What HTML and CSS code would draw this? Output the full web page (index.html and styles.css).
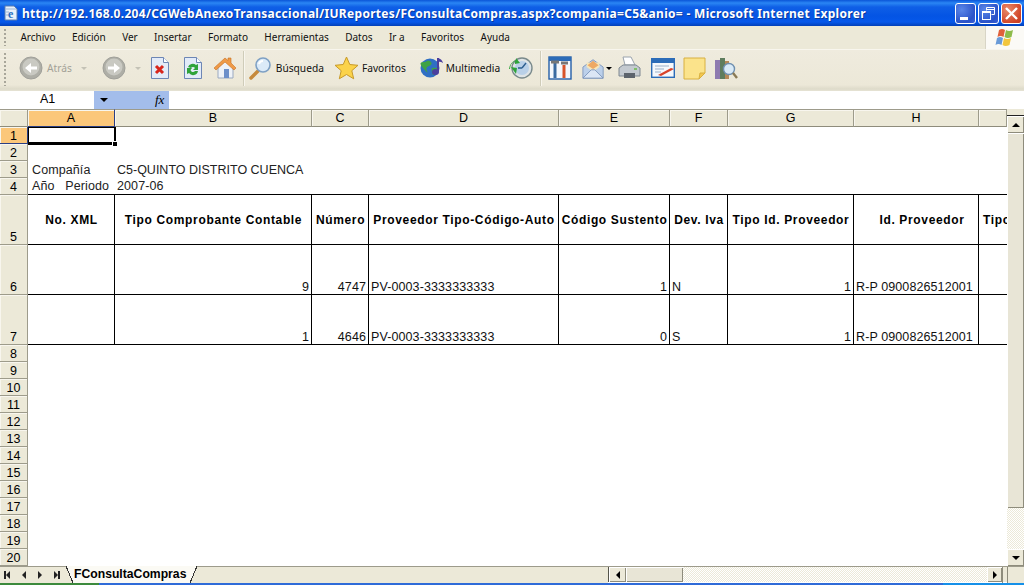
FILE: index.html
```html
<!DOCTYPE html>
<html>
<head>
  <title>FConsultaCompras</title>
  <link rel="stylesheet" href="styles.css">
</head>
<body>
  <div class="titlebar">
    <svg class="ie-doc" width="16" height="16" viewBox="0 0 16 16"><path d="M2 1h9l3 3v11H2z" fill="#e8f0fa" stroke="#5a7fb0"/><path d="M3 4h10M3 7h3M3 10h3" stroke="#9bb6d8"/><text x="5" y="13" class="ie-e">e</text></svg>
    <span class="title-text">http://192.168.0.204/CGWebAnexoTransaccional/IUReportes/FConsultaCompras.aspx?compania=C5&amp;anio= - Microsoft Internet Explorer</span>
    <div class="win-btns">
      <div class="win-btn"><svg width="21" height="21" viewBox="0 0 21 21"><rect x="5" y="14" width="8" height="3" fill="#fff"/></svg></div>
      <div class="win-btn"><svg width="21" height="21" viewBox="0 0 21 21"><path d="M8.500 4.500h8v7h-3M8.500 6.500h8M8.500 4.500v3" fill="none" stroke="#fff"/><rect x="4.500" y="8.500" width="8" height="8" fill="none" stroke="#fff"/><path d="M4.500 9.500h8" stroke="#fff"/></svg></div>
      <div class="win-btn close"><svg width="21" height="21" viewBox="0 0 21 21"><path d="M5 5l11 11M16 5L5 16" stroke="#fff" stroke-width="2.400"/></svg></div>
    </div>
  </div>

  <div class="menubar">
    <div class="grip"></div>
    <span class="menu-item">Archivo</span>
    <span class="menu-item">Edición</span>
    <span class="menu-item">Ver</span>
    <span class="menu-item">Insertar</span>
    <span class="menu-item">Formato</span>
    <span class="menu-item">Herramientas</span>
    <span class="menu-item">Datos</span>
    <span class="menu-item">Ir a</span>
    <span class="menu-item">Favoritos</span>
    <span class="menu-item">Ayuda</span>
    <div class="xp-flag">
      <svg width="22" height="22" viewBox="0 0 22 22"><path d="M5 3q3-2 6 0l-1.500 7q-3-2-6 0z" fill="#e0603a"/><path d="M12 3q3 2 7 0l-1.500 7q-4 2-7 0z" fill="#8dbb4a"/><path d="M3 11q3-2 6 0l-1.500 7q-3-2-6 0z" fill="#6a9bd8"/><path d="M10 11q3 2 7 0l-1.500 7q-4 2-7 0z" fill="#f2c63e"/></svg>
    </div>
  </div>

  <div class="toolbar">
    <div class="grip"></div>
    <div class="tool back">
      <svg width="24" height="24" viewBox="0 0 24 24"><circle cx="12" cy="12" r="11" fill="#aeaea6" stroke="#a0a09a"/><circle cx="12" cy="11" r="8.500" fill="#c9c9c2"/><path d="M18 10.500h-6V7l-6 5 6 5v-3.500h6z" fill="#fff"/></svg>
      <span class="tool-label gray">Atrás</span>
      <span class="mini-arrow gray-arrow"></span>
    </div>
    <div class="tool forward">
      <svg width="24" height="24" viewBox="0 0 24 24"><circle cx="12" cy="12" r="11" fill="#aeaea6" stroke="#a0a09a"/><circle cx="12" cy="11" r="8.500" fill="#c9c9c2"/><path d="M6 10.500h6V7l6 5-6 5v-3.500H6z" fill="#fff"/></svg>
      <span class="mini-arrow gray-arrow"></span>
    </div>
    <div class="tool stop">
      <svg width="20" height="24" viewBox="0 0 20 24"><path d="M1.500 1.500h12l5 5v16h-17z" fill="#e3ebf8" stroke="#6d86b5"/><path d="M13.500 1.500v5h5" fill="#fff" stroke="#6d86b5"/><path d="M6 10l7 7M13 10l-7 7" stroke="#d8261c" stroke-width="3"/></svg>
    </div>
    <div class="tool refresh">
      <svg width="20" height="24" viewBox="0 0 20 24"><path d="M1.500 1.500h12l5 5v16h-17z" fill="#e3ebf8" stroke="#6d86b5"/><path d="M13.500 1.500v5h5" fill="#fff" stroke="#6d86b5"/><path d="M5 11a5 5 0 0 1 8-2l2-1v6h-5l2-2a2.500 2.500 0 0 0-4 0z" fill="#2fa33a"/><path d="M15 15a5 5 0 0 1-9 2l-2 1v-6h5l-1.500 2a2.500 2.500 0 0 0 4.500 1z" fill="#2fa33a"/></svg>
    </div>
    <div class="tool home">
      <svg width="24" height="24" viewBox="0 0 24 24"><path d="M5 12v10h15V11l-7-7z" fill="#eef2f7" stroke="#9aa9c0"/><path d="M1 12L12 2l3 2.500V2h3v5l5 5-2 2-9-8-9 8z" fill="#ef9a47" stroke="#c86f20" stroke-width=".6"/><rect x="11" y="13" width="5" height="9" fill="#6c8fc9"/></svg>
    </div>
    <div class="tool-sep first-sep"></div>
    <div class="tool search">
      <svg width="24" height="24" viewBox="0 0 24 24"><path d="M10 15l-7 7" stroke="#c68a3c" stroke-width="3.500" stroke-linecap="round"/><circle cx="15" cy="9" r="7" fill="#dbeaf8" stroke="#7ea0c4" stroke-width="1.600"/><path d="M11 8a4 4 0 0 1 4-3" stroke="#fff" stroke-width="2" fill="none"/></svg>
      <span class="tool-label">Búsqueda</span>
    </div>
    <div class="tool favs">
      <svg width="25" height="25" viewBox="0 0 25 25"><path d="M12.500 1l3.300 7.500 8.200.8-6.200 5.400 1.900 8.100-7.200-4.300-7.200 4.300 1.900-8.100L1 9.300l8.200-.8z" fill="#fbd34a" stroke="#c79a2a"/></svg>
      <span class="tool-label fav-label">Favoritos</span>
    </div>
    <div class="tool media">
      <svg width="24" height="24" viewBox="0 0 24 24"><circle cx="10" cy="12" r="9.500" fill="#2f6fc4"/><path d="M5 6q4-3 6 0t-2 4-2 5-4-3 2-6zM12 12q4-1 6 1-1 5-5 6-2-3-1-7z" fill="#3fa245"/><path d="M18 2v13" stroke="#4b3f9e" stroke-width="2"/><path d="M18 2q4 1 5 5-3-2-5-1z" fill="#4b3f9e"/><ellipse cx="15.500" cy="16" rx="3.500" ry="3" fill="#4b3f9e"/></svg>
      <span class="tool-label media-label">Multimedia</span>
    </div>
    <div class="tool history">
      <svg width="24" height="24" viewBox="0 0 24 24"><circle cx="13" cy="12" r="10" fill="#dfe4e6" stroke="#7a8a8c" stroke-width="1.400"/><circle cx="13" cy="12" r="7" fill="#b9d0e8"/><path d="M13 12l4-5M13 12h-4" stroke="#2d5e8f" stroke-width="1.400"/><path d="M1 13a9 9 0 0 1 5-8v3l5-1-4-5v2A11 11 0 0 0 0 13z" fill="#2fa33a"/><path d="M2 11l6 1-1 6z" fill="#2fa33a"/></svg>
    </div>
    <div class="tool-sep"></div>
    <div class="tool tools">
      <svg width="24" height="24" viewBox="0 0 24 24"><rect x="1" y="1" width="22" height="22" fill="#f4f7fb" stroke="#245fa8" stroke-width="1.400"/><rect x="1" y="1" width="22" height="4" fill="#2c6cb8"/><path d="M7 7v15" stroke="#3a6aa0" stroke-width="3"/><path d="M16 9v13" stroke="#d8532a" stroke-width="3"/><path d="M3 6h8M13 7h7" stroke="#777" stroke-width="3"/></svg>
    </div>
    <div class="tool mail">
      <svg width="23" height="24" viewBox="0 0 25 24"><path d="M1 11L12 3l11 8v12H1z" fill="#bcd0ea" stroke="#7d96bb"/><path d="M5 11V6h14v5l-7 5z" fill="#f6e6ba"/><path d="M6 9l6-5 6 5-6 4z" fill="#eea964"/><path d="M1 23l9-9h4l9 9z" fill="#dbe6f5" stroke="#7d96bb"/></svg>
      <span class="mini-arrow tight-arrow"></span>
    </div>
    <div class="tool print">
      <svg width="24" height="24" viewBox="0 0 24 24"><path d="M6 1h8l4 8H8z" fill="#fff" stroke="#9aa3ad"/><path d="M2 12l4-3h13l4 3v8H2z" fill="#c4cad0" stroke="#7f8891"/><rect x="7" y="17" width="11" height="5" fill="#5d646c"/><rect x="17" y="12" width="3" height="2" fill="#7fc06a"/></svg>
    </div>
    <div class="tool edit">
      <svg width="24" height="20" viewBox="0 0 24 20"><rect x=".7" y=".7" width="22.600" height="18.600" fill="#f5f8fc" stroke="#2c6cb8" stroke-width="1.400"/><rect x="1" y="1" width="22" height="4" fill="#2c6cb8"/><path d="M4 8h14M4 11h9M4 14h6" stroke="#9bb0c9"/><path d="M7 17l13-7 3 1-13 7z" fill="#d8432a"/></svg>
    </div>
    <div class="tool note">
      <svg width="23" height="23" viewBox="0 0 23 23"><path d="M1 1h21v15l-6 6H1z" fill="#fbe38b" stroke="#d8b040"/><path d="M16 22l1-6h5z" fill="#f4c74f" stroke="#d8b040"/></svg>
    </div>
    <div class="tool research">
      <svg width="24" height="24" viewBox="0 0 24 24"><rect x="1" y="4" width="5" height="19" fill="#8e7bb0"/><rect x="6" y="2" width="5" height="21" fill="#5f7d5e"/><rect x="11" y="5" width="4" height="18" fill="#b58a5a"/><circle cx="15" cy="13" r="5.500" fill="#d9eaf7" stroke="#6f8faf" stroke-width="1.400"/><path d="M19 17l4 5" stroke="#8a7a55" stroke-width="2.400"/></svg>
    </div>
  </div>

  <div class="formula-bar">
    <div class="name-box">A1</div>
    <div class="name-drop"><span class="mini-arrow big"></span><i class="fx">fx</i></div>
    <div class="formula-input"></div>
  </div>

  <div class="sheet-area">
    <div class="grid-wrap">
      <table class="sheet">
        <colgroup>
          <col class="c-head"><col class="c-a"><col class="c-b"><col class="c-c"><col class="c-d"><col class="c-e"><col class="c-f"><col class="c-g"><col class="c-h"><col class="c-i">
        </colgroup>
        <tr class="col-heads">
          <th></th><th class="active">A</th><th>B</th><th>C</th><th>D</th><th>E</th><th>F</th><th>G</th><th>H</th><th></th>
        </tr>
        <tr>
          <th class="active">1</th>
          <td class="selected"><div class="sel-box"><span class="sel-handle"></span></div></td>
          <td></td><td></td><td></td><td></td><td></td><td></td><td></td><td></td>
        </tr>
        <tr><th>2</th><td></td><td></td><td></td><td></td><td></td><td></td><td></td><td></td><td></td></tr>
        <tr>
          <th>3</th><td class="lbl">Compañía</td><td class="lbl overflow">C5-QUINTO DISTRITO CUENCA</td>
          <td></td><td></td><td></td><td></td><td></td><td></td><td></td>
        </tr>
        <tr>
          <th>4</th><td class="lbl">Año&nbsp;&nbsp;&nbsp;Periodo</td><td class="lbl">2007-06</td>
          <td></td><td></td><td></td><td></td><td></td><td></td><td></td>
        </tr>
        <tr class="tall head-row">
          <th>5</th>
          <td>No. XML</td><td>Tipo Comprobante Contable</td><td>Número</td><td>Proveedor Tipo-Código-Auto</td><td>Código Sustento</td><td>Dev. Iva</td><td>Tipo Id. Proveedor</td><td class="id-prov">Id. Proveedor</td><td class="cut">Tipo</td>
        </tr>
        <tr class="tall data-row">
          <th>6</th>
          <td></td><td class="num">9</td><td class="num">4747</td><td>PV-0003-3333333333</td><td class="num">1</td><td>N</td><td class="num">1</td><td>R-P 0900826512001</td><td class="cut"></td>
        </tr>
        <tr class="tall data-row">
          <th>7</th>
          <td></td><td class="num">1</td><td class="num">4646</td><td>PV-0003-3333333333</td><td class="num">0</td><td>S</td><td class="num">1</td><td>R-P 0900826512001</td><td class="cut"></td>
        </tr>
        <tr><th>8</th><td colspan="9"></td></tr>
        <tr><th>9</th><td colspan="9"></td></tr>
        <tr><th>10</th><td colspan="9"></td></tr>
        <tr><th>11</th><td colspan="9"></td></tr>
        <tr><th>12</th><td colspan="9"></td></tr>
        <tr><th>13</th><td colspan="9"></td></tr>
        <tr><th>14</th><td colspan="9"></td></tr>
        <tr><th>15</th><td colspan="9"></td></tr>
        <tr><th>16</th><td colspan="9"></td></tr>
        <tr><th>17</th><td colspan="9"></td></tr>
        <tr><th>18</th><td colspan="9"></td></tr>
        <tr><th>19</th><td colspan="9"></td></tr>
        <tr><th>20</th><td colspan="9"></td></tr>
      </table>
    </div>
    <div class="vscroll">
      <div class="vs-top"></div>
      <div class="sb-btn"><span class="arrow up"></span></div>
      <div class="vs-thumb"></div>
      <div class="vs-track"></div>
      <div class="sb-btn"><span class="arrow down"></span></div>
    </div>
  </div>

  <div class="tabbar">
    <div class="tab-nav">
      <span class="nav-arrow first"></span>
      <span class="nav-arrow prev"></span>
      <span class="nav-arrow next"></span>
      <span class="nav-arrow last"></span>
    </div>
    <div class="tab">FConsultaCompras</div>
    <div class="tab-rest"></div>
    <div class="hscroll">
      <div class="sb-btn wide left-btn"><span class="arrow left"></span></div>
      <div class="hs-thumb"></div>
      <div class="hs-track"></div>
      <div class="sb-btn wide right-btn"><span class="arrow right"></span></div>
      <div class="splitter"></div>
    </div>
    <div class="corner"></div>
  </div>
  <div class="taskstrip">
    <div class="strip-start"></div>
    <div class="strip-mid"></div>
    <div class="strip-tray"></div>
  </div>
</body>
</html>
```

FILE: styles.css
```css
html, body {
  margin: 0;
  padding: 0;
}

body {
  width: 1024px;
  height: 585px;
  overflow: hidden;
  background-color: #ece9d8;
  font-family: "Liberation Sans", Arial, sans-serif;
  color: #000;
}

/* ventana */
.titlebar {
  height: 26px;
  display: flex;
  align-items: center;
  padding-left: 3px;
  box-sizing: border-box;
  background: linear-gradient(to bottom, #0a55d8 0, #2a86f4 3px, #0f5fe6 7px, #0454e4 16px, #0658ea 22px, #0240b8 26px);
}

.ie-doc {
  flex: none;
}

.ie-e {
  font: bold 12px "Liberation Serif", serif;
  fill: #2a6fc0;
}

.title-text {
  margin-left: 3px;
  color: #fff;
  font: bold 12px "Noto Sans", sans-serif;
  letter-spacing: 0.3px;
  white-space: nowrap;
  text-shadow: 1px 1px #0a3a9c;
}

.win-btns {
  margin-left: auto;
  margin-right: 2px;
  display: flex;
  gap: 2px;
}

.win-btn {
  width: 21px;
  height: 21px;
  border: 1px solid #fff;
  border-radius: 3px;
  box-sizing: border-box;
  background: radial-gradient(circle at 30% 30%, #5a86e8, #2a52c8 70%, #3a62d8);
  overflow: hidden;
}

.win-btn svg {
  display: block;
  margin: -1px;
}

.win-btn.close {
  background: radial-gradient(circle at 30% 30%, #e88a6a, #d2472a 70%, #c23a20);
}

.menubar {
  height: 24px;
  display: flex;
  align-items: center;
  padding-left: 4px;
  background-color: #ece9d8;
  border-bottom: 1px solid #f8f6ee;
  box-sizing: border-box;
  font: 10px "Noto Sans", sans-serif;
}

.grip {
  width: 2px;
  align-self: stretch;
  margin: 3px 0;
  background-image: linear-gradient(to bottom, #a8a69a 2px, transparent 2px);
  background-size: 2px 4px;
  flex: none;
}

.menu-item {
  padding: 0 8.200px 2px;
  color: #111;
}

.grip + .menu-item {
  margin-left: 6.300px;
}

.xp-flag {
  margin-left: auto;
  width: 39px;
  height: 23px;
  align-self: flex-start;
  background-color: #fbfaf6;
  border-left: 1px solid #d8d5c6;
  box-sizing: border-box;
  display: flex;
  align-items: center;
  justify-content: center;
}

.toolbar {
  height: 41px;
  display: flex;
  align-items: center;
  padding: 0 0 5px 4px;
  background: linear-gradient(to bottom, #efebde, #ece8d8 85%, #dedbca 95%, #e6e3d4);
  box-sizing: border-box;
  font: 10.200px "Noto Sans", sans-serif;
}

.toolbar .grip {
  margin: 3px 0 0;
}

.tool {
  display: flex;
  align-items: center;
  flex: none;
}

.back { margin-left: 13px; }
.forward { margin-left: 15px; }
.stop { margin-left: 9px; }
.refresh { margin-left: 13px; }
.home { margin-left: 10px; }
.search { margin-left: 0; }
.favs { margin-left: 10px; }
.media { margin-left: 14px; }
.history { margin-left: 9px; }
.tools { margin-left: 0; }
.mail { margin-left: 10px; }
.print { margin-left: 5px; }
.edit { margin-left: 10px; }
.note { margin-left: 8px; }
.research { margin-left: 8px; }

.tool-label {
  margin-left: 4px;
  color: #111;
}

.fav-label {
  margin-left: 3px;
}

.media-label {
  margin-left: 2px;
}

.tool-label.gray {
  color: #a3a197;
}

.tool-sep {
  width: 1px;
  height: 35px;
  margin: 0 6px 0 7px;
  background-color: #cfccb9;
  border-right: 1px solid #f8f6ee;
  flex: none;
}

.first-sep {
  margin: 0 3px 0 6px;
}

.mini-arrow {
  width: 0;
  height: 0;
  margin-left: 3px;
  border-left: 3px solid transparent;
  border-right: 3px solid transparent;
  border-top: 3px solid #000;
}

.gray-arrow {
  margin-left: 9px;
  border-top-color: #c4c2b6;
}

.tight-arrow {
  margin-left: 1px;
}

/* barra de formulas */
.formula-bar {
  height: 18px;
  display: flex;
  font-size: 12.500px;
  background-color: #fff;
}

.name-box {
  width: 94px;
  box-sizing: border-box;
  padding: 1px 0 0 40px;
  background-color: #fff;
}

.name-drop {
  width: 75px;
  background-color: #a3bdeb;
  display: flex;
  align-items: center;
  padding-left: 6px;
  box-sizing: border-box;
}

.name-drop .big {
  margin-left: 0;
  border-left-width: 4px;
  border-right-width: 4px;
  border-top-width: 4px;
}

.fx {
  margin-left: 47px;
  font: italic 13px "Liberation Serif", serif;
}

.formula-input {
  flex: 1;
}

/* hoja */
.sheet-area {
  height: 457px;
  display: flex;
  background-color: #fff;
}

.grid-wrap {
  width: 1007px;
  height: 457px;
  overflow: hidden;
  flex: none;
}

.sheet {
  border-collapse: separate;
  border-spacing: 0;
  table-layout: fixed;
  width: 1007px;
  font-size: 12.500px;
}

.c-head { width: 28px; }
.c-a { width: 87px; }
.c-b { width: 197px; }
.c-c { width: 57px; }
.c-d { width: 190px; }
.c-e { width: 111px; }
.c-f { width: 58px; }
.c-g { width: 126px; }
.c-h { width: 125px; }
.c-i { width: 28px; }

.sheet tr {
  height: 17px;
}

.sheet th {
  padding: 0;
  height: 17px;
  box-sizing: border-box;
  background-color: #ece9d8;
  border-right: 1px solid #9d9b8b;
  border-bottom: 1px solid #9d9b8b;
  font-weight: normal;
  vertical-align: bottom;
  line-height: 13px;
  box-shadow: inset 1px 1px #f8f6ee;
}

.sheet td {
  padding: 0 2px;
  height: 17px;
  box-sizing: border-box;
  white-space: nowrap;
  overflow: hidden;
  vertical-align: bottom;
  line-height: 13px;
  letter-spacing: 0.1px;
}

.col-heads {
  height: 18px;
}

.sheet .col-heads th {
  height: 18px;
  line-height: 15px;
  border-top: 1px solid #9d9b8b;
  border-bottom: 1px solid #8e8c7c;
}

.sheet th.active {
  background-color: #fbc77a;
  border-bottom-color: #2b3f84;
  border-right-color: #2b3f84;
}

.selected {
  position: relative;
  overflow: visible !important;
}

.sel-box {
  position: absolute;
  left: 0;
  top: 0;
  right: -1px;
  bottom: -1px;
  border: 1px solid #000;
  border-right-width: 2px;
  border-bottom-width: 3px;
}

.sel-handle {
  position: absolute;
  right: -4px;
  bottom: -5px;
  width: 4px;
  height: 4px;
  background-color: #000;
  border: 1px solid #fff;
}

.sheet td.lbl {
  padding-left: 4px;
  line-height: 15px;
  color: #222;
}

.sheet td.lbl + td.lbl {
  padding-left: 2px;
}

.sheet td.lbl.overflow {
  overflow: visible;
  letter-spacing: 0;
}

.sheet tr:nth-child(5) td {
  border-bottom: 1px solid #000;
}

.sheet tr.tall {
  height: 50px;
}

.sheet tr.tall th {
  height: 50px;
}

.sheet tr.tall td {
  height: 50px;
  border-right: 1px solid #000;
  border-bottom: 1px solid #000;
}

.sheet .head-row td {
  text-align: center;
  vertical-align: middle;
  font-size: 12px;
  font-weight: bold;
  letter-spacing: 0.65px;
  padding: 2px 0 0 1px;
}

.sheet .head-row td.id-prov {
  padding-left: 12px;
}

.sheet tr.tall td.cut {
  border-right: 0;
}

.sheet .head-row td.cut {
  text-align: left;
  padding-left: 4px;
}

.data-row td {
  color: #111;
}

.num {
  text-align: right;
}

/* barras de desplazamiento */
.vscroll {
  width: 17px;
  height: 457px;
  display: flex;
  flex-direction: column;
  background-color: #ece9d8;
}

.vs-top {
  height: 6px;
  border-bottom: 1px solid #222;
}

.sb-btn {
  height: 17px;
  background-color: #ece9d8;
  box-shadow: inset 1px 1px #fff, inset -1px -1px #8e8c7c;
  display: flex;
  align-items: center;
  justify-content: center;
  flex: none;
}

.vs-thumb {
  height: 375px;
  background-color: #e8e5d6;
  box-shadow: inset 1px 1px #fff, inset -1px -1px #8e8c7c;
  flex: none;
}

.vs-track, .hs-track {
  flex: 1;
  background-color: #f5f3ea;
  background-image: repeating-conic-gradient(#ece9d8 0 25%, #fff 0 50%);
  background-size: 2px 2px;
}

.arrow {
  width: 0;
  height: 0;
  border-style: solid;
  border-color: transparent;
}

.arrow.up {
  border-width: 0 4px 4px;
  border-bottom-color: #000;
}

.arrow.down {
  border-width: 4px 4px 0;
  border-top-color: #000;
}

.arrow.left {
  border-width: 4px 4px 4px 0;
  border-right-color: #000;
}

.arrow.right {
  border-width: 4px 0 4px 4px;
  border-left-color: #000;
}

/* pestañas */
.tabbar {
  height: 17px;
  display: flex;
  align-items: stretch;
  background-color: #ece9d8;
  border-top: 1px solid #9d9b8b;
  box-sizing: border-box;
}

.tab-nav {
  width: 66px;
  display: flex;
  align-items: center;
  flex: none;
  padding-left: 4px;
  box-sizing: border-box;
}

.nav-arrow {
  width: 0;
  height: 0;
  border-style: solid;
  border-color: transparent;
  margin-right: 12px;
}

.nav-arrow.first, .nav-arrow.prev {
  border-width: 4px 4px 4px 0;
  border-right-color: #222;
}

.nav-arrow.next, .nav-arrow.last {
  border-width: 4px 0 4px 4px;
  border-left-color: #222;
}

.nav-arrow.first {
  margin-left: 2px;
  box-shadow: -2px 0 #222;
}

.nav-arrow.last {
  margin-right: 0;
  box-shadow: 2px 0 #222;
}

.tab {
  position: relative;
  margin-top: -1px;
  width: 131px;
  padding: 1px 0 0 8px;
  box-sizing: border-box;
  font-weight: bold;
  font-size: 12.200px;
  line-height: 15px;
  background-color: #fbfaf4;
  flex: none;
}

.tab::before, .tab::after {
  content: "";
  position: absolute;
  top: 0;
  bottom: 0;
  width: 7px;
}

.tab::before {
  left: 0;
  background: linear-gradient(to bottom left, transparent 46%, #333 46%, #333 54%, #ece9d8 54%);
}

.tab::after {
  right: 0;
  background: linear-gradient(to bottom right, transparent 46%, #333 46%, #333 54%, #ece9d8 54%);
}

.tab-rest {
  width: 411px;
  flex: none;
}

.hscroll {
  flex: 1;
  display: flex;
  box-shadow: inset 0 -1px #fff;
}

.sb-btn.wide {
  height: 15px;
}

.left-btn {
  width: 18px;
  border-left: 1px solid #55544a;
  box-sizing: border-box;
}

.right-btn {
  width: 15px;
}

.hs-thumb {
  width: 57px;
  height: 15px;
  background-color: #e8e5d6;
  box-shadow: inset 1px 1px #fff, inset -1px -1px #8e8c7c;
  flex: none;
}

.hs-track {
  height: 15px;
}

.splitter {
  width: 5px;
  flex: none;
  border-left: 1px solid #8e8c7c;
  box-sizing: border-box;
}

.corner {
  width: 17px;
  flex: none;
  background-color: #ece9d8;
  border-left: 1px solid #8e8c7c;
  box-sizing: border-box;
}

.taskstrip {
  height: 2px;
  display: flex;
}

.strip-start {
  width: 99px;
  background-color: #3c8a3c;
}

.strip-mid {
  width: 844px;
  background-color: #2f6bd8;
}

.strip-tray {
  flex: 1;
  background-color: #1590e8;
}
```
